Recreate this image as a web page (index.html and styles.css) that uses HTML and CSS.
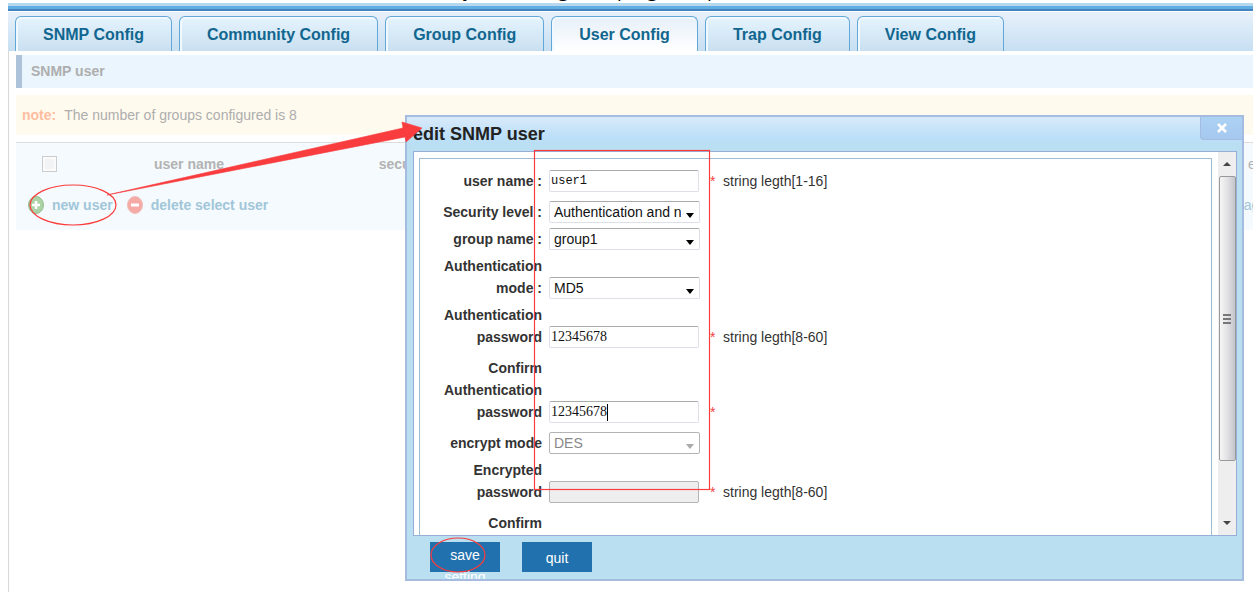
FILE: index.html
```html
<!DOCTYPE html>
<html lang="en">
<head>
<meta charset="utf-8">
<title>SNMP user</title>
<link rel="stylesheet" href="styles.css">
</head>
<body>
<div class="page">
  <p class="caption"><span>y</span><span>g</span><span>p</span><span>g</span><span>p</span></p>
  <div class="topline"></div>
  <nav class="tabs">
    <a class="tab" href="#">SNMP Config</a>
    <a class="tab" href="#">Community Config</a>
    <a class="tab" href="#">Group Config</a>
    <a class="tab active" href="#">User Config</a>
    <a class="tab" href="#">Trap Config</a>
    <a class="tab" href="#">View Config</a>
  </nav>
  <main class="content">
    <h1 class="section">SNMP user</h1>
    <p class="note"><span class="note-label">note:</span>The number of groups configured is 8</p>
    <div class="list">
      <table class="users">
        <tr>
          <th class="col-check"><input type="checkbox" aria-label="select all"></th>
          <th class="col-name">user name</th>
          <th class="col-level">security level</th>
          <th class="col-last">edit</th>
        </tr>
      </table>
      <div class="actions">
        <a class="action" href="#">
          <svg width="16" height="18" viewBox="0 0 16 18"><ellipse cx="8" cy="9" rx="7.5" ry="8.5" fill="#acd3a5" stroke="#93bd8e"/><path d="M8 5v8M4 9h8" stroke="#fff" stroke-width="2.6"/></svg>
          new user</a>
        <a class="action" href="#">
          <svg width="16" height="18" viewBox="0 0 16 18"><ellipse cx="8" cy="9" rx="7.5" ry="8.5" fill="#f5aaa6" stroke="#f0bdb9"/><path d="M4 9h8" stroke="#fff" stroke-width="3"/></svg>
          delete select user</a>
        <span class="pager">age</span>
      </div>
    </div>
  </main>
</div>

<section class="dialog" role="dialog" aria-labelledby="dialog-title">
  <header class="dialog-head">
    <h2 id="dialog-title">edit SNMP user</h2>
    <button class="close" type="button" aria-label="close"><svg width="12" height="10" viewBox="0 0 12 10"><path d="M2 1l8 8M10 1L2 9" stroke="#fff" stroke-width="2.6"/></svg></button>
  </header>
  <div class="viewport">
    <form class="form">
      <div class="row">
        <label for="name">user name :</label>
        <div class="field"><input class="mono" id="name" type="text" value="user1"></div>
        <span class="star">*</span><span class="hint">string legth[1-16]</span>
      </div>
      <div class="row pick">
        <label for="level">Security level :</label>
        <div class="field"><select id="level"><option>Authentication and no encryption</option></select><i class="caret"></i></div>
      </div>
      <div class="row pick">
        <label for="group">group name :</label>
        <div class="field"><select id="group"><option>group1</option></select><i class="caret"></i></div>
      </div>
      <div class="row pick">
        <label for="mode">Authentication mode :</label>
        <div class="field"><select id="mode"><option>MD5</option></select><i class="caret"></i></div>
      </div>
      <div class="row">
        <label for="pass">Authentication password</label>
        <div class="field"><input id="pass" type="text" value="12345678"></div>
        <span class="star">*</span><span class="hint">string legth[8-60]</span>
      </div>
      <div class="row">
        <label for="pass2">Confirm Authentication password</label>
        <div class="field"><input id="pass2" type="text" value="12345678"><i class="cursor"></i></div>
        <span class="star">*</span>
      </div>
      <div class="row pick">
        <label for="enc">encrypt mode</label>
        <div class="field"><select id="enc" disabled><option>DES</option></select><i class="caret off"></i></div>
      </div>
      <div class="row">
        <label for="encpass">Encrypted password</label>
        <div class="field"><input id="encpass" type="text" disabled></div>
        <span class="star">*</span><span class="hint">string legth[8-60]</span>
      </div>
      <div class="row">
        <label for="encpass2">Confirm</label>
      </div>
    </form>
    <div class="scrollbar">
      <i class="up"></i>
      <div class="thumb"><i></i><i></i><i></i></div>
      <i class="down"></i>
    </div>
  </div>
  <footer class="dialog-foot">
    <button class="btn" type="button">save setting</button>
    <button class="btn single" type="button">quit</button>
  </footer>
</section>

<svg class="marks" width="720" height="592" viewBox="0 0 720 592" fill="none" stroke="#fa3c3c" stroke-width="1.2">
  <ellipse cx="73" cy="205" rx="43" ry="20"/>
  <ellipse cx="458" cy="555" rx="27" ry="17"/>
  <rect x="534.5" y="150.5" width="175" height="339"/>
  <path d="M107 195L403 128L402 122L422 128L406 142L405 137Z" fill="#f93c3e" stroke="#f93c3e" stroke-width=".6"/>
</svg>
</body>
</html>
```
FILE: styles.css
```css
* { box-sizing: border-box; }
body {
  margin: 0;
  background: #fff;
  color: #333;
  font: 14px/22px "Liberation Sans", Arial, sans-serif;
  overflow: hidden;
  min-height: 100vh;
  position: relative;
}
.page { margin: 0 5px 0 8px; }
.caption {
  height: 3px;
  margin: 0;
  padding-left: 455px;
  display: grid;
  grid-template-columns: 95px 59px 30px 60px 20px;
  align-content: end;
  overflow: hidden;
  color: #000;
  font: 19px/26px "Open Sans", sans-serif;
}
.topline {
  height: 9px;
  background: linear-gradient(#b5d8ef 0 3px, #62aee2 3px 6px, #4383bf 6px 8px, #fff 8px);
}
.tabs {
  display: flex;
  gap: 7px;
  height: 39px;
  padding: 4px 7px 0;
  background: linear-gradient(#e8f1fb, #c6dff2);
}
.tab {
  padding: 0 27px;
  border: 1px solid #61a7d8;
  border-bottom: 0;
  border-radius: 6px 6px 0 0;
  box-shadow: inset 1px 1px 0 1px #f1f9ff;
  background: linear-gradient(#e5f4fe, #c9dff0);
  color: #11668f;
  font-size: 16px;
  font-weight: bold;
  line-height: 35px;
  text-decoration: none;
  white-space: nowrap;
}
.tab.active { background: linear-gradient(#e6eff8, #fff); }
.content {
  min-height: 541px;
  padding: 4px 0 0 7px;
  border-left: 1px solid #d8d8d8;
}
.section {
  margin: 0;
  padding-left: 9px;
  border-left: 6px solid #adc3da;
  background: #eaf5fd;
  color: #aeaeae;
  font-size: 14px;
  line-height: 33px;
}
.note {
  margin: 7px 0;
  padding-left: 6px;
  background: #fffaee;
  color: #adadad;
  line-height: 40px;
}
.note-label { margin-right: 8px; color: #ffbd9f; font-weight: bold; }
.list {
  height: 88px;
  border-top: 1px solid #dcdcdc;
  background: #f4fafd;
  overflow: hidden;
}
.users { width: 100%; border-collapse: collapse; table-layout: fixed; color: #b3b3b3; }
.users th { height: 42px; padding: 0; }
.col-check { width: 67px; }
.col-name { width: 212px; }
.col-level { width: 256px; }
.users .col-last { padding-left: 697px; text-align: left; font-weight: normal; }
.users input {
  appearance: none;
  display: block;
  width: 15px;
  height: 16px;
  margin: 0 auto;
  border: 1px solid #ccc;
  background: #f1f3f4;
  box-shadow: inset 0 0 0 2px #fafafa;
}
.actions { display: flex; gap: 14px; padding: 9px 0 0 12px; }
.action { display: flex; gap: 8px; align-items: center; color: #a1c6d9; font-weight: bold; text-decoration: none; }
.pager { margin-left: auto; margin-right: -14px; color: #a1c6d9; }

.dialog {
  position: absolute;
  left: 405px;
  right: 14px;
  top: 115px;
  border: 2px solid #a5bbdf;
  background: #b9dff0;
  overflow: hidden;
}
.dialog-head {
  display: flex;
  justify-content: space-between;
  align-items: flex-start;
  height: 34px;
  padding-left: 6px;
  background: linear-gradient(#d9eafa, #bbdff8 60%, #b9dff0);
}
.dialog-head h2 { margin: 0; color: #222; font-size: 18px; line-height: 34px; }
.close {
  width: 42px;
  height: 23px;
  padding: 0;
  border: 1px solid #a5bbdf;
  border-width: 0 0 1px 1px;
  border-radius: 0 0 0 4px;
  background: linear-gradient(#acd2f4, #a6c8ef);
}
.viewport {
  display: flex;
  gap: 6px;
  height: 385px;
  margin: 0 5px 0 6px;
  padding: 6px 0 0 5px;
  border: 1px solid #98aed6;
  background: #fff;
  overflow: hidden;
}
.form {
  flex: 1;
  height: 480px;
  padding: 11px 0 0 19px;
  border: 1px solid #9fbcd2;
}
.row { display: flex; align-items: flex-end; margin-bottom: 9px; }
.row.pick { margin-bottom: 5px; }
.row label { width: 103px; text-align: right; font-weight: bold; }
.field { position: relative; width: 151px; height: 22px; margin: 0 10px 0 7px; }
.field input, .field select {
  display: block;
  appearance: none;
  height: 22px;
  border: 1px solid #dde0ea;
  border-top-color: #aaa;
  border-radius: 2px;
  background: #fff;
  color: #111;
}
.field input { width: 150px; padding: 0 1px; font: 14px "Liberation Serif", serif; }
.field .mono { font: 12px "Liberation Mono", monospace; }
.field select { width: 151px; padding: 0 18px 0 4px; font: 14px "Liberation Sans", Arial, sans-serif; }
.field :disabled { border-color: #b4b4b4; opacity: 1; }
.field input:disabled { background: #eee; }
.field select:disabled { color: #888; }
.caret {
  position: absolute;
  right: 6px;
  top: 12px;
  border: 4px solid transparent;
  border-top: 5px solid #000;
  border-bottom: 0;
}
.caret.off { border-top-color: #aaa; }
.cursor { position: absolute; left: 58px; top: 3px; width: 1px; height: 17px; background: #000; }
.star { width: 13px; color: #f54040; }
.scrollbar {
  display: flex;
  flex-direction: column;
  align-items: center;
  width: 18px;
  margin-top: -6px;
  background: #eee;
}
.up, .down { border: 4px solid transparent; }
.up { margin: 10px 0; border-top: 0; border-bottom: 4px solid #444; }
.down { margin: auto 0 10px; border-bottom: 0; border-top: 4px solid #444; }
.thumb {
  display: flex;
  flex-direction: column;
  justify-content: center;
  align-items: center;
  gap: 2px;
  width: 17px;
  height: 285px;
  border: 1px solid #999;
  border-radius: 2px;
  background: linear-gradient(90deg, #f5f5f5, #e4e4e7 45%, #c4c5cb);
}
.thumb i { width: 8px; height: 2px; background: #777; }
.dialog-foot { display: flex; gap: 22px; height: 43px; padding: 6px 0 0 23px; }
.btn {
  width: 70px;
  height: 30px;
  padding: 2px 8px;
  border: 0;
  background: #2171ae;
  color: #fff;
  font: 14px/22px "Liberation Sans", Arial, sans-serif;
  display: flex;
  align-items: flex-start;
  justify-content: center;
}
.btn.single { padding-top: 5px; }
.marks { position: absolute; left: 0; top: 0; pointer-events: none; }
```
